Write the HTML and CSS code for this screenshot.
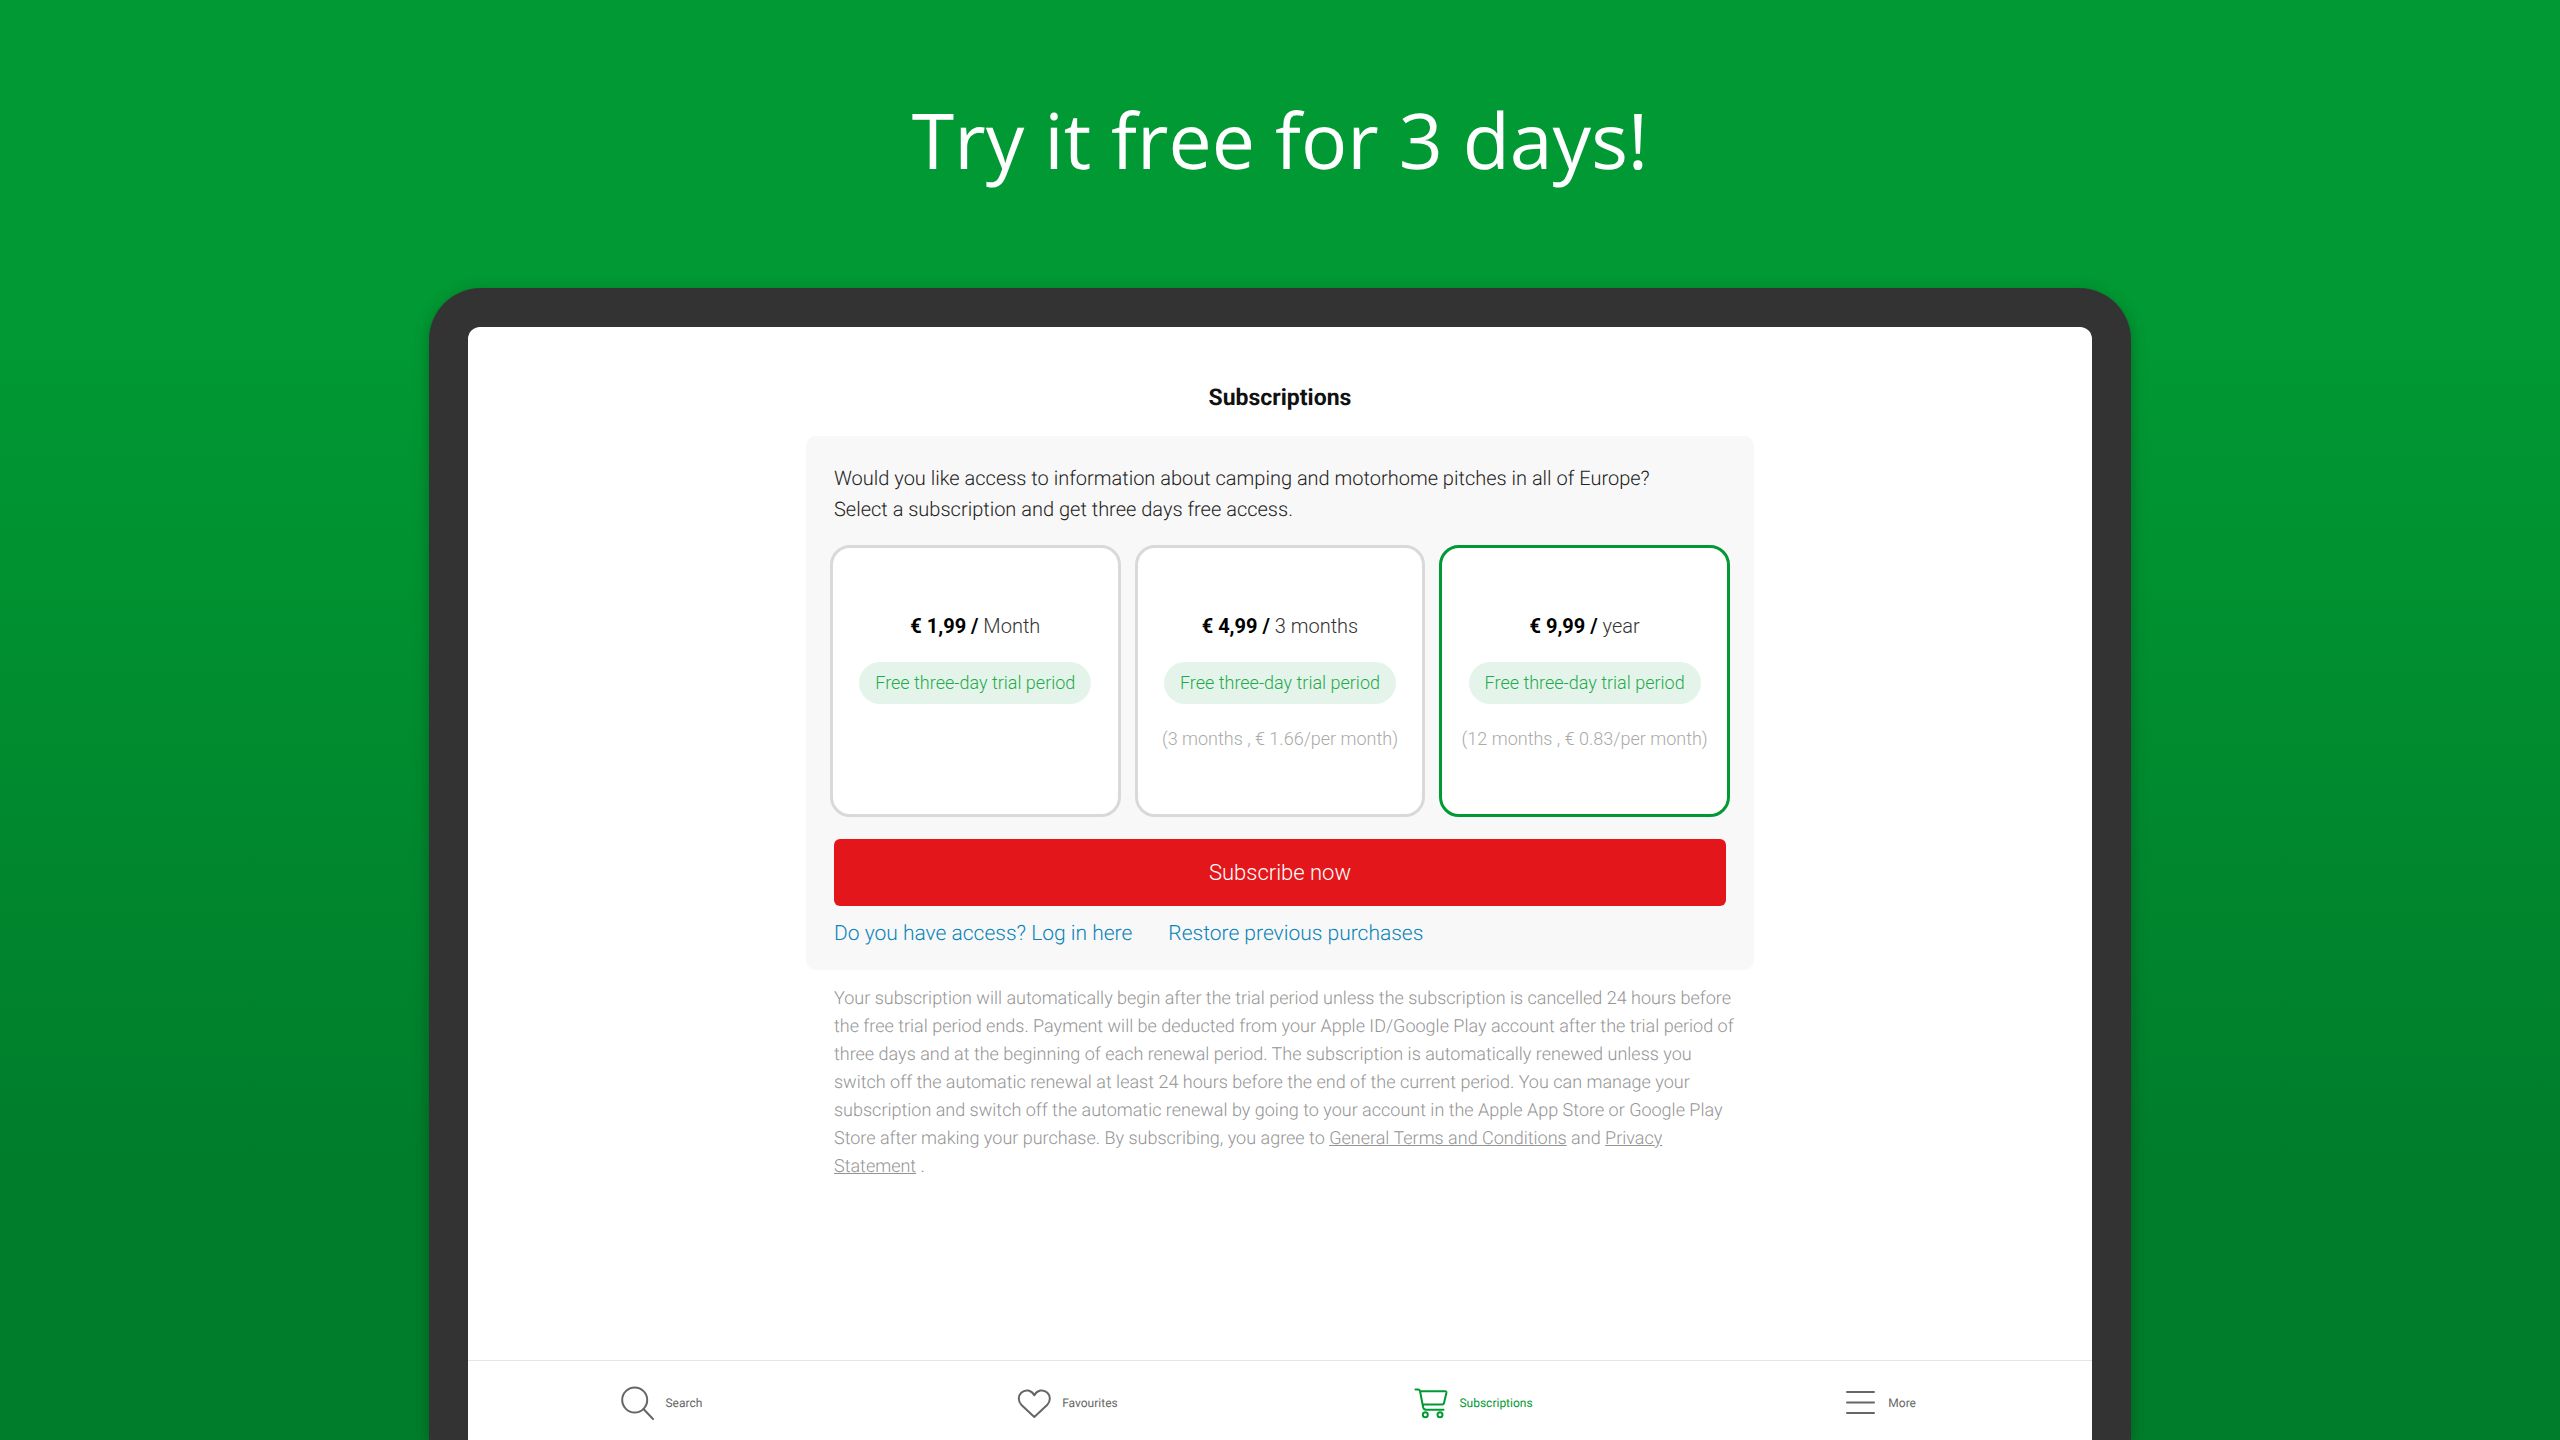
FILE: index.html
```html
<!DOCTYPE html>
<html lang="en">
<head>
  <meta charset="UTF-8">
  <meta name="viewport" content="width=device-width, initial-scale=1.0">
  <title>Subscriptions</title>
  <link rel="stylesheet" href="styles.css">
</head>
<body>
  <h1 class="headline">Try it free for 3 days!</h1>

  <div class="tablet">
    <div class="screen">
      <main class="content">
        <h2 class="title">Subscriptions</h2>

        <form class="panel">
          <p class="intro">Would you like access to information about camping and motorhome pitches in all of Europe?<br>Select a subscription and get three days free access.</p>

          <div class="plans">
            <button type="button" class="plan">
              <span class="price"><b>€ 1,99 /</b> Month</span>
              <span class="trial">Free three-day trial period</span>
            </button>
            <button type="button" class="plan">
              <span class="price"><b>€ 4,99 /</b> 3 months</span>
              <span class="trial">Free three-day trial period</span>
              <span class="note">(3 months , € 1.66/per month)</span>
            </button>
            <button type="button" class="plan selected">
              <span class="price"><b>€ 9,99 /</b> year</span>
              <span class="trial">Free three-day trial period</span>
              <span class="note">(12 months , € 0.83/per month)</span>
            </button>
          </div>

          <button type="submit" class="subscribe">Subscribe now</button>

          <div class="links">
            <a href="#login">Do you have access? Log in here</a>
            <a href="#restore">Restore previous purchases</a>
          </div>
        </form>

        <p class="terms">
          Your subscription will automatically begin after the trial period unless the subscription is cancelled 24 hours before<br>
          the free trial period ends. Payment will be deducted from your Apple ID/Google Play account after the trial period of<br>
          three days and at the beginning of each renewal period. The subscription is automatically renewed unless you<br>
          switch off the automatic renewal at least 24 hours before the end of the current period. You can manage your<br>
          subscription and switch off the automatic renewal by going to your account in the Apple App Store or Google Play<br>
          Store after making your purchase. By subscribing, you agree to <a href="#terms">General Terms and Conditions</a> and <a href="#privacy">Privacy<br>
          Statement</a> .
        </p>
      </main>

      <nav class="tabs">
        <a href="#search" class="tab">
          <svg class="icon" viewBox="0 0 36 36"><circle cx="15.700" cy="15" r="12.500"/><path d="M24.500 24 34 34"/></svg>
          Search
        </a>
        <a href="#favourites" class="tab">
          <svg class="icon" viewBox="0 0 36 36"><path d="M18.300 32 5.500 20C1.800 16.200 2 10.800 5.200 7.700 9.500 3.800 15.500 5 18.300 10.300 21.100 5 27.100 3.800 31.400 7.700 34.600 10.800 34.800 16.200 31.100 20Z"/></svg>
          Favourites
        </a>
        <a href="#subscriptions" class="tab active">
          <svg class="icon" viewBox="0 0 36 36"><path d="M2.500 4.500H5Q6.500 4.500 7 6L10.200 22.500Q10.700 24.700 13 24.700H30.500M7 6.300H32Q33.700 6.300 33.400 8L31 18Q30.700 19.400 29.300 19.400H9.500"/><circle cx="12.300" cy="29.800" r="2.500"/><circle cx="27" cy="29.800" r="2.500"/></svg>
          Subscriptions
        </a>
        <a href="#more" class="tab">
          <svg class="icon" viewBox="0 0 36 36"><path d="M5 7h27M5 17.500h27M5 28h27"/></svg>
          More
        </a>
      </nav>
    </div>
  </div>
</body>
</html>
```
FILE: styles.css
```css
* {
  box-sizing: border-box;
}
body {
  margin: 0;
  min-height: 100vh;
  display: flex;
  flex-direction: column;
  align-items: center;
  font-family: Roboto, sans-serif;
  font-weight: 300;
  text-rendering: geometricPrecision;
  background: linear-gradient(#009933 0%, #009933 24%, #007d2b 80%, #007d2b 100%);
}
h1, h2, p {
  margin: 0;
}
.headline {
  padding: 84px 0 92px;
  font-family: "Open Sans", "Noto Sans", sans-serif;
  font-size: 77px;
  line-height: 112px;
  font-weight: 400;
  color: white;
}

/* Tablet frame */
.tablet {
  flex: 1;
  display: flex;
  width: 66.5%;
  padding: 39px 39px 0;
  background-color: #333333;
  border-radius: 52px 52px 0 0;
  box-shadow: 0 4px 16px rgba(0, 0, 0, 0.25);
}
.screen {
  flex: 1;
  display: flex;
  flex-direction: column;
  background-color: white;
  border-radius: 12px 12px 0 0;
}
.content {
  flex: 1;
  width: 100%;
  max-width: 948px;
  margin: 0 auto;
  padding-top: 55px;
}
.title {
  margin-bottom: 22px;
  font-size: 23px;
  line-height: 32px;
  font-weight: 700;
  text-align: center;
  color: #111111;
}

/* Subscription panel */
.panel {
  padding: 27px 24px 20px;
  background-color: #f8f8f8;
  border-radius: 10px;
}
.intro {
  padding: 0 4px;
  font-size: 20px;
  line-height: 31px;
  color: #222222;
}
.plans {
  display: grid;
  grid-template-columns: repeat(3, 1fr);
  gap: 14px;
  margin: 20px 0 22px;
}
.plan {
  display: flex;
  flex-direction: column;
  align-items: center;
  height: 272px;
  padding: 63px 0 0;
  border: 3px solid #d9d9d9;
  border-radius: 20px;
  background-color: white;
  font: inherit;
  color: #333333;
  cursor: pointer;
}
.plan.selected {
  border-color: #009933;
}
.price {
  font-size: 20px;
  line-height: 30px;
}
.price b {
  font-weight: 700;
  color: black;
}
.trial {
  margin: 21px 0;
  padding: 0 16px;
  border-radius: 21px;
  background-color: #e5f4ea;
  font-size: 18px;
  line-height: 42px;
  color: #1faa4c;
}
.note {
  font-size: 18px;
  line-height: 28px;
  color: #aaaaaa;
}
.subscribe {
  display: block;
  width: calc(100% - 8px);
  margin: 0 auto;
  border: none;
  border-radius: 6px;
  background-color: #e3171b;
  font: inherit;
  font-size: 22px;
  line-height: 65px;
  color: white;
  cursor: pointer;
}
.links {
  display: flex;
  gap: 36px;
  padding: 13px 4px 0;
  font-size: 21px;
  line-height: 31px;
}
.links a {
  color: #0a84b8;
  text-decoration: none;
}
.terms {
  padding: 15px 0 14px 28px;
  font-size: 18px;
  line-height: 28px;
  color: #949494;
}
.terms a {
  color: inherit;
}

/* Bottom navigation */
.tabs {
  display: grid;
  grid-template-columns: repeat(4, 1fr);
  height: 80px;
  border-top: 1px solid #e5e5e5;
}
.tab {
  display: flex;
  align-items: center;
  justify-content: center;
  gap: 10px;
  padding: 5px 20px 0 0;
  font-size: 12px;
  font-weight: 400;
  color: #666666;
  text-decoration: none;
}
.tab.active {
  color: #009933;
}
.icon {
  width: 36px;
  height: 36px;
  fill: none;
  stroke: currentColor;
  stroke-width: 2;
  stroke-linecap: round;
  stroke-linejoin: round;
}
```
